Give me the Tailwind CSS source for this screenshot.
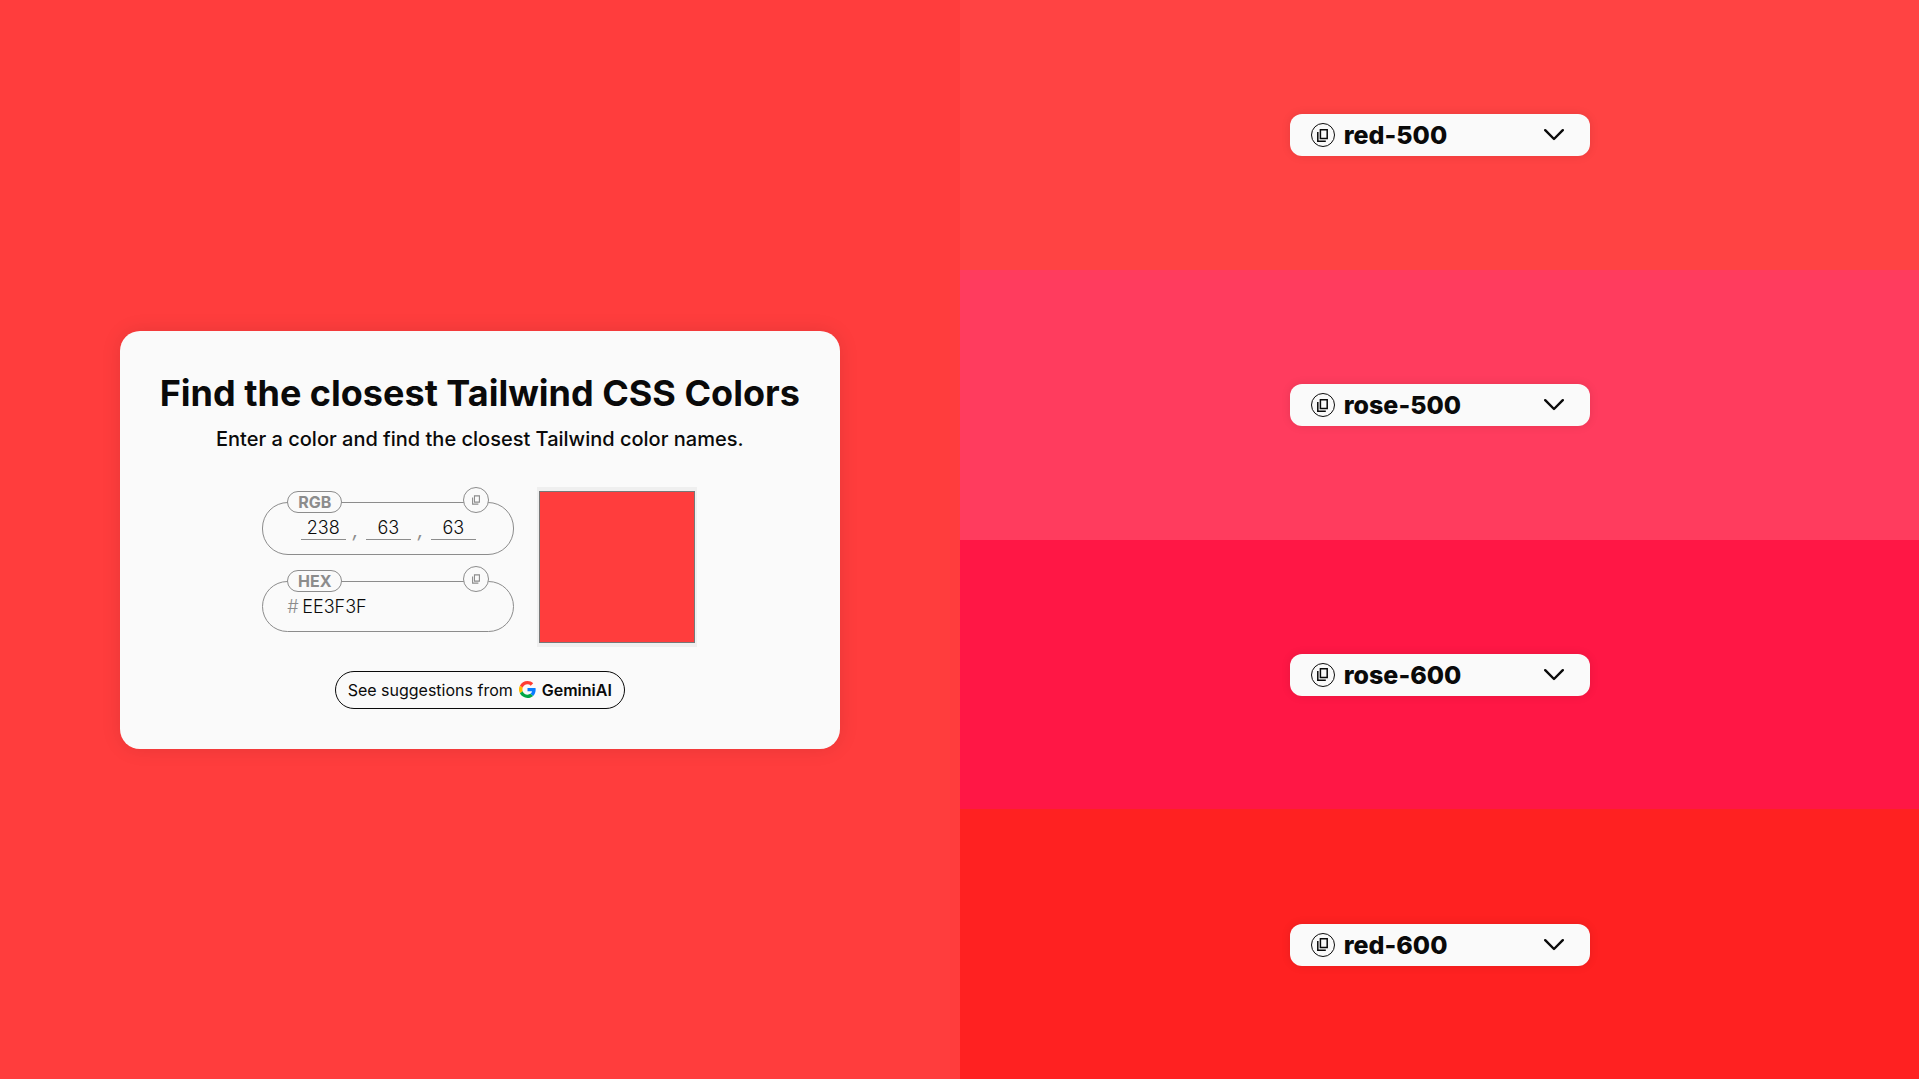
<!DOCTYPE html>
<html lang="en">
<head>
<meta charset="utf-8">
<meta name="viewport" content="width=device-width, initial-scale=1">
<title>Find the closest Tailwind CSS Colors</title>
<script src="https://cdn.jsdelivr.net/npm/@tailwindcss/browser@4"></script>
</head>
<body class="font-[Inter,sans-serif] text-neutral-950">
<svg class="hidden" aria-hidden="true">
  <symbol id="copy" viewBox="0 0 11 13"><path d="M3.400.8h6.800v8.600H3.400zM.8 3v9.200h8" fill="none" stroke="currentColor" stroke-width="1.500"/></symbol>
  <symbol id="chevron" viewBox="0 0 20 12"><path d="M1.200 1.200 10 10l8.800-8.800" fill="none" stroke="currentColor" stroke-width="2.400" stroke-linecap="round" stroke-linejoin="round"/></symbol>
</svg>
<div class="grid min-h-screen grid-cols-2">
  <main class="flex items-center justify-center bg-[#ff3d3d]">
    <section class="flex flex-col items-center rounded-[20px] bg-neutral-50 p-10 shadow-[0_0_20px_rgb(0_0_0/0.1)]">
      <h1 class="text-4xl leading-[44px] font-bold">Find the closest Tailwind CSS Colors</h1>
      <p class="mt-[10px] text-xl leading-7 font-medium">Enter a color and find the closest Tailwind color names.</p>
      <div class="mt-[34px] flex gap-[23px]">
        <div class="flex w-[252px] flex-col gap-[26px] pt-[15px]">
          <div role="group" aria-label="RGB" class="relative flex h-[53px] items-center justify-center rounded-[26px] border border-[#8c8c8c] text-[#8c8c8c]">
            <span class="absolute -top-3 left-6 flex h-[22px] w-[55px] items-center justify-center rounded-full border border-[#8c8c8c] bg-neutral-50 text-base font-bold">RGB</span>
            <button aria-label="Copy RGB" class="absolute -top-4 right-6 flex size-[26px] items-center justify-center rounded-full border border-[#8c8c8c] bg-neutral-50"><svg class="h-[10px] w-2"><use href="#copy"/></svg></button>
            <div class="flex items-end text-lg leading-6">
              <input aria-label="Red" value="238" class="h-6 w-[45px] border-b border-[#8c8c8c] text-center font-light text-neutral-950">
              <span class="h-6 w-5 text-center text-xl italic">,</span>
              <input aria-label="Green" value="63" class="h-6 w-[45px] border-b border-[#8c8c8c] text-center font-light text-neutral-950">
              <span class="h-6 w-5 text-center text-xl italic">,</span>
              <input aria-label="Blue" value="63" class="h-6 w-[45px] border-b border-[#8c8c8c] text-center font-light text-neutral-950">
            </div>
          </div>
          <div class="relative flex h-[51px] items-center rounded-[26px] border border-[#8c8c8c] px-6 pt-px text-lg font-light text-[#8c8c8c]">
            <label for="hex" class="absolute -top-3 left-6 flex h-[22px] w-[55px] items-center justify-center rounded-full border border-[#8c8c8c] bg-neutral-50 text-base font-bold">HEX</label>
            <button aria-label="Copy HEX" class="absolute -top-4 right-6 flex size-[26px] items-center justify-center rounded-full border border-[#8c8c8c] bg-neutral-50"><svg class="h-[10px] w-2"><use href="#copy"/></svg></button>
            <span class="w-[15px]">#</span><input id="hex" value="EE3F3F" class="w-40 text-neutral-950">
          </div>
        </div>
        <input type="color" aria-label="Pick a color" value="#ff3d3d" class="size-40 bg-[#efefef]">
      </div>
      <button class="mt-6 flex h-[38px] items-center rounded-full border border-neutral-950 px-3 text-base">
        <span>See suggestions from</span>
        <svg class="mr-[6px] ml-[6px] size-[17px]" viewBox="0 0 48 48" aria-hidden="true"><path fill="#ff3d32" d="M24 9.500c3.500 0 6.700 1.200 9.200 3.600l6.900-6.900C35.900 2.400 30.500 0 24 0 14.600 0 6.500 5.400 2.600 13.200l8 6.200C12.400 13.700 17.700 9.500 24 9.500z"/><path fill="#087cff" d="M47 24.500c0-1.600-.2-3.100-.4-4.500H24v9h12.900c-.6 3-2.200 5.500-4.700 7.200l7.700 6c4.500-4.200 7.100-10.400 7.100-17.700z"/><path fill="#ffbd00" d="M10.500 28.600a14 14 0 0 1 0-9.200l-8-6.200a24 24 0 0 0 0 21.600z"/><path fill="#00a846" d="M24 48c6.500 0 11.900-2.100 15.900-5.800l-7.700-6c-2.200 1.500-4.900 2.300-8.200 2.300-6.300 0-11.600-4.200-13.500-9.900l-8 6.200C6.500 42.600 14.600 48 24 48z"/></svg>
        <span class="font-semibold">GeminiAI</span>
      </button>
    </section>
  </main>
  <aside aria-label="Closest colors" class="grid grid-rows-4">
    <div class="flex items-center justify-center bg-[#ff4343] pt-px pl-px">
      <div class="flex h-[42px] w-[300px] items-center rounded-xl bg-neutral-50 px-[21px] shadow-[0_0_10px_rgb(0_0_0/0.1)]">
        <button aria-label="Copy red-500" class="flex size-6 shrink-0 items-center justify-center rounded-full border border-neutral-950"><svg class="h-[13px] w-[11px]"><use href="#copy"/></svg></button>
        <div class="ml-[9px] grid flex-1 items-center">
          <select aria-label="First match" class="col-start-1 row-start-1 appearance-none text-[25px] leading-8 font-extrabold"><option>red-500</option></select>
          <svg class="pointer-events-none col-start-1 row-start-1 mr-[5px] h-3 w-5 justify-self-end"><use href="#chevron"/></svg>
        </div>
      </div>
    </div>
    <div class="flex items-center justify-center bg-[#ff3c5e] pt-px pl-px">
      <div class="flex h-[42px] w-[300px] items-center rounded-xl bg-neutral-50 px-[21px] shadow-[0_0_10px_rgb(0_0_0/0.1)]">
        <button aria-label="Copy rose-500" class="flex size-6 shrink-0 items-center justify-center rounded-full border border-neutral-950"><svg class="h-[13px] w-[11px]"><use href="#copy"/></svg></button>
        <div class="ml-[9px] grid flex-1 items-center">
          <select aria-label="Second match" class="col-start-1 row-start-1 appearance-none text-[25px] leading-8 font-extrabold"><option>rose-500</option></select>
          <svg class="pointer-events-none col-start-1 row-start-1 mr-[5px] h-3 w-5 justify-self-end"><use href="#chevron"/></svg>
        </div>
      </div>
    </div>
    <div class="flex items-center justify-center bg-[#ff1745] pt-px pl-px">
      <div class="flex h-[42px] w-[300px] items-center rounded-xl bg-neutral-50 px-[21px] shadow-[0_0_10px_rgb(0_0_0/0.1)]">
        <button aria-label="Copy rose-600" class="flex size-6 shrink-0 items-center justify-center rounded-full border border-neutral-950"><svg class="h-[13px] w-[11px]"><use href="#copy"/></svg></button>
        <div class="ml-[9px] grid flex-1 items-center">
          <select aria-label="Third match" class="col-start-1 row-start-1 appearance-none text-[25px] leading-8 font-extrabold"><option>rose-600</option></select>
          <svg class="pointer-events-none col-start-1 row-start-1 mr-[5px] h-3 w-5 justify-self-end"><use href="#chevron"/></svg>
        </div>
      </div>
    </div>
    <div class="flex items-center justify-center bg-[#ff2121] pt-px pl-px">
      <div class="flex h-[42px] w-[300px] items-center rounded-xl bg-neutral-50 px-[21px] shadow-[0_0_10px_rgb(0_0_0/0.1)]">
        <button aria-label="Copy red-600" class="flex size-6 shrink-0 items-center justify-center rounded-full border border-neutral-950"><svg class="h-[13px] w-[11px]"><use href="#copy"/></svg></button>
        <div class="ml-[9px] grid flex-1 items-center">
          <select aria-label="Fourth match" class="col-start-1 row-start-1 appearance-none text-[25px] leading-8 font-extrabold"><option>red-600</option></select>
          <svg class="pointer-events-none col-start-1 row-start-1 mr-[5px] h-3 w-5 justify-self-end"><use href="#chevron"/></svg>
        </div>
      </div>
    </div>
  </aside>
</div>
</body>
</html>
